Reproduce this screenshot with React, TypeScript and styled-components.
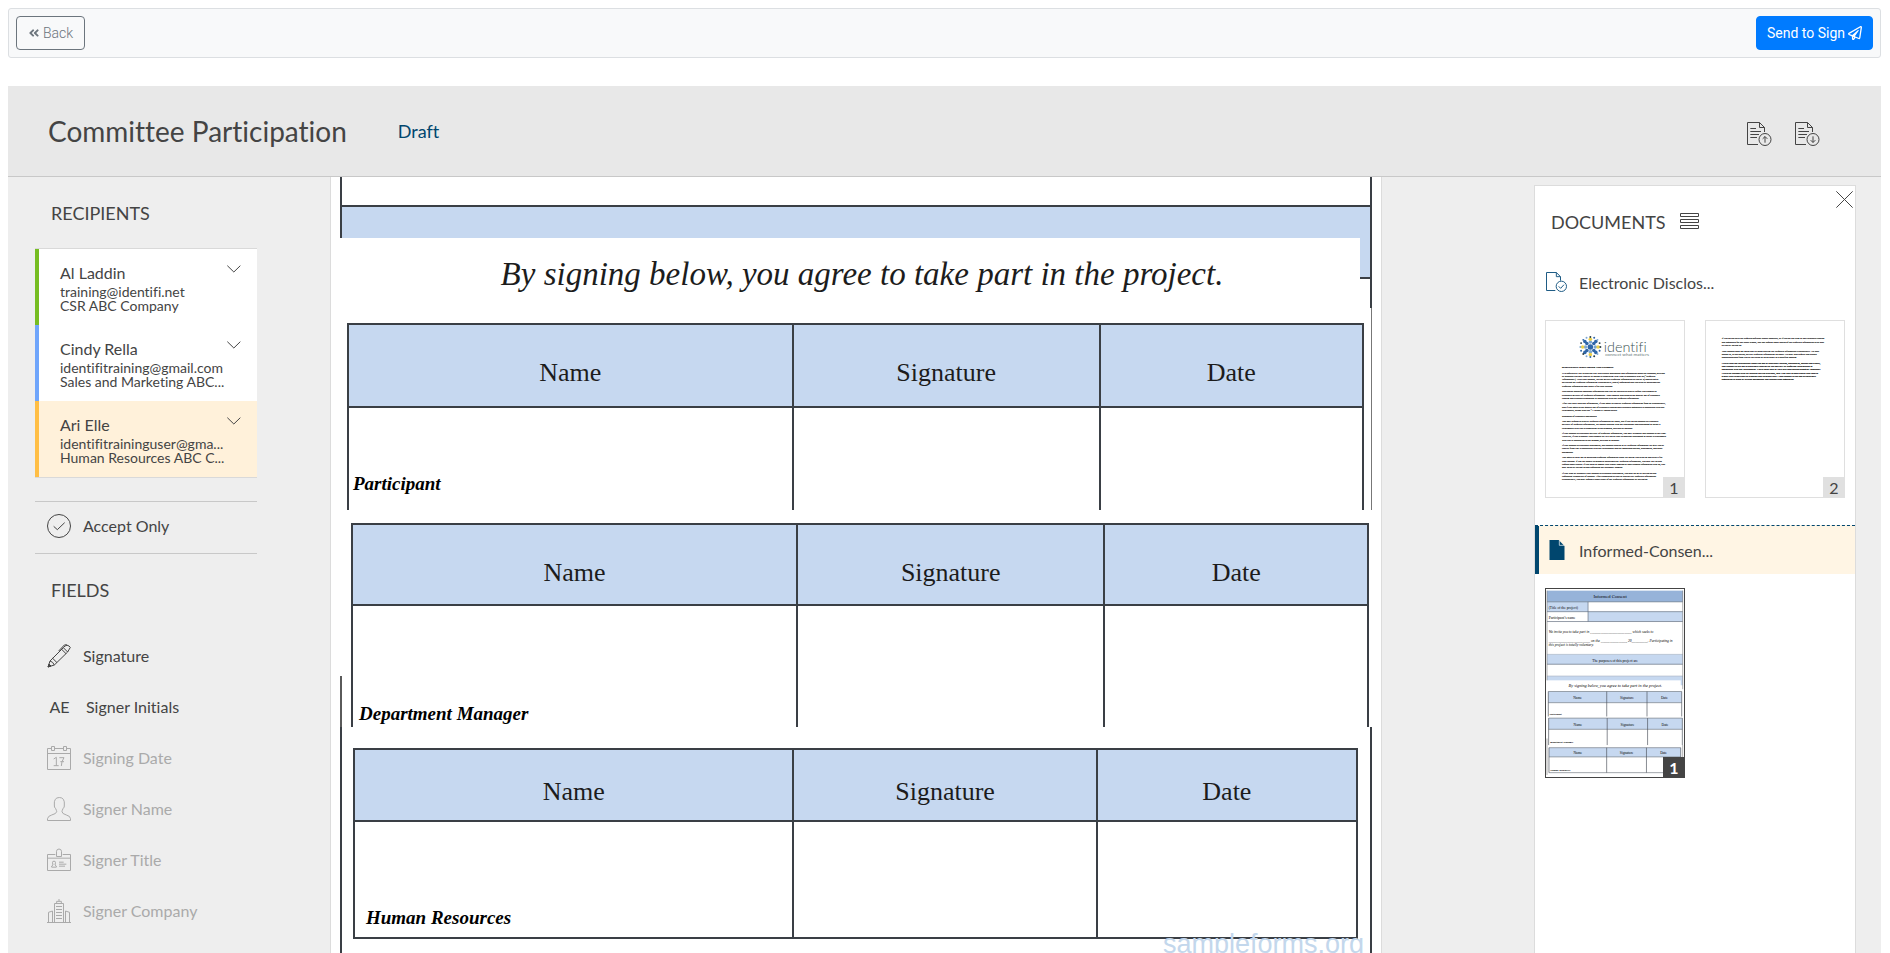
import React from "react";
import styled, { createGlobalStyle } from "styled-components";
import { FaAngleDoubleLeft, FaRegPaperPlane } from "react-icons/fa";

const ink = "#444444";
const navy = "#00466e";
const paleBlue = "#c6d8f0";
const hairline = "#d9d9d9";

const GlobalStyle = createGlobalStyle`
  *, *::before, *::after { box-sizing: border-box; }
  body {
    margin: 0;
    background: #fff;
    color: ${ink};
    font-family: Lato, "Liberation Sans", sans-serif;
    font-size: 16px;
    font-variant-ligatures: none;
  }
  h1, h2, p, ul { margin: 0; padding: 0; font-weight: 400; }
  ul { list-style: none; }
  button { font: inherit; color: inherit; margin: 0; padding: 0; border: 0; background: none; cursor: pointer; font-variant-ligatures: none; }
  button:disabled { cursor: default; }
`;

/* ---------- page shell ---------- */

const Shell = styled.div`
  display: flex;
  flex-direction: column;
  height: 100vh;
  padding: 8px 9px 0 8px;
`;

const Toolbar = styled.nav`
  display: flex;
  flex: none;
  justify-content: space-between;
  padding: 7px;
  margin-bottom: 28px;
  background: #f8f9fa;
  border: 1px solid #dcdfe2;
  border-radius: 3px;
`;

const ToolbarButton = styled.button<{ $primary?: boolean }>`
  display: flex;
  align-items: center;
  gap: 3px;
  height: 34px;
  padding: 0 ${(p) => (p.$primary ? 10 : 11)}px;
  border: 1px solid ${(p) => (p.$primary ? "#007bff" : "#6c757d")};
  border-radius: 4px;
  background: ${(p) => (p.$primary ? "#007bff" : "transparent")};
  color: ${(p) => (p.$primary ? "#fff" : "#6c757d")};
  font-family: Roboto, "Liberation Sans", sans-serif;
  font-size: 14px;
  font-weight: ${(p) => (p.$primary ? 400 : 300)};
`;

const TitleBar = styled.header`
  display: flex;
  flex: none;
  align-items: center;
  height: 91px;
  padding: 0 61px 0 40px;
  background: #e8e8e8;
  border-bottom: 1px solid #c8c8c8;
`;

const Title = styled.h1`
  font-size: 28px;
  line-height: 34px;
`;

const Status = styled.span`
  flex: 1;
  margin-left: 51px;
  color: ${navy};
  font-size: 18px;
  line-height: 24px;
`;

const TitleActions = styled.div`
  display: flex;
  gap: 23px;
  padding-top: 5px;
`;

const IconButton = styled.button`
  display: flex;
`;

const Workspace = styled.main`
  display: grid;
  flex: 1;
  grid-template-columns: 322px minmax(0, 1fr) 347px;
  min-height: 0;
  overflow: hidden;
  background: #eeeeee;
`;

/* ---------- left column ---------- */

const Sidebar = styled.aside`
  min-height: 0;
  padding: 24px 73px 0 27px;
  overflow-y: auto;
  scrollbar-width: none;
`;

const SectionTitle = styled.h2`
  padding-left: 16px;
  font-size: 18px;
  line-height: 24px;
`;

const RecipientList = styled.ul`
  margin-top: 23px;
  border: solid ${hairline};
  border-width: 1px 0;
`;

const Recipient = styled.li<{ $stripe: string; $active?: boolean }>`
  background: ${(p) => (p.$active ? "#fff1da" : "#fff")};
  border-left: 4px solid ${(p) => p.$stripe};
`;

const RecipientButton = styled.button`
  display: flex;
  align-items: flex-start;
  width: 100%;
  height: 76px;
  padding: 14px 16px 0 21px;
  text-align: left;
  svg { margin-top: 2px; }
`;

const RecipientText = styled.span`
  display: flex;
  flex: none;
  flex-direction: column;
  width: 167px;
  font-size: 14px;
  line-height: 14px;
`;

const RecipientName = styled.span`
  margin-bottom: 2px;
  font-size: 16px;
  line-height: 20px;
`;

/* The padding keeps descenders visible without opening up the tight lines. */
const Clipped = styled.span`
  margin: -2px 0 -3px;
  padding: 2px 0 3px;
  overflow: hidden;
  text-overflow: ellipsis;
  white-space: nowrap;
`;

const AcceptBox = styled.div`
  margin: 23px 0 24px;
  border: solid #c8c8c8;
  border-width: 1px 0;
`;

const FieldList = styled.ul`
  margin-top: 28px;
`;

const FieldButton = styled.button<{ $gap?: number }>`
  display: flex;
  align-items: center;
  gap: ${(p) => p.$gap ?? 12}px;
  width: 100%;
  height: 51px;
  padding-left: 12px;
  white-space: nowrap;
  text-align: left;
  &:disabled { color: #aaaaaa; }
`;

const AcceptButton = styled(FieldButton)`
  padding-bottom: 4px;
`;

const Initials = styled.span`
  width: 25px;
  text-align: center;
`;

/* ---------- document viewer ---------- */

const Viewer = styled.section`
  min-height: 0;
  padding-right: 152px;
  overflow-y: auto;
  scrollbar-width: none;
`;

const Sheet = styled.article`
  border: solid #dcdcdc;
  border-width: 0 1px;
  background: #fff;
  color: #1c1c1c;
  font-family: "Liberation Serif", serif;
`;

const rule = "2px solid #3a3f45";

const PriorRow = styled.div`
  height: 61px;
  margin: 0 9px;
  border: ${rule};
  border-width: 0 2px;
`;

const PriorBlank = styled.div`
  height: 30px;
  border-bottom: ${rule};
`;

const PriorShade = styled.div`
  height: 31px;
  background: ${paleBlue};
`;

const AgreementRow = styled.div`
  display: flex;
  height: 70px;
  margin: 0 9px;
  border-right: ${rule};
`;

const Agreement = styled.p`
  flex: 1;
  padding: 16px 0 0 24px;
  font-size: 33px;
  font-style: italic;
  line-height: 40px;
  text-align: center;
  white-space: nowrap;
`;

const ShadeStrip = styled.div`
  width: 10px;
  height: 41px;
  background: ${paleBlue};
  border-bottom: ${rule};
`;

const FirstBlock = styled.div`
  margin-right: 9px;
  padding: 15px 7px 0 16px;
  border-right: 1px solid #777;
`;

const SecondBlock = styled.div`
  display: flex;
  align-items: flex-end;
  gap: 9px;
  padding: 13px 12px 0 9px;
`;

const Rail = styled.div`
  flex: none;
  width: 2px;
  height: 51px;
  background: #5a5a5a;
`;

const ThirdBlock = styled.div`
  position: relative;
  margin: 0 9px;
  padding: 21px 12px 60px 11px;
  border: ${rule};
  border-width: 0 2px;
`;

const Watermark = styled.span`
  position: absolute;
  right: 6px;
  top: 201px;
  color: #c3d7ec;
  font-family: "Liberation Sans", sans-serif;
  font-size: 27px;
  line-height: 32px;
`;

const SignTable = styled.table<{ $closed?: boolean }>`
  width: 100%;
  table-layout: fixed;
  border-spacing: 0;
  border: ${rule};
  border-bottom-width: ${(p) => (p.$closed ? 2 : 0)}px;
  th:nth-child(1) { width: 43.7%; }
  th:nth-child(2) { width: 30.3%; }
`;

const HeadCell = styled.th<{ $height: number; $drop: number }>`
  height: ${(p) => p.$height}px;
  padding: 0 0 ${(p) => p.$drop}px;
  background: ${paleBlue};
  border-bottom: ${rule};
  font-size: 26px;
  font-weight: 400;
  line-height: 30px;
  text-align: center;
  vertical-align: bottom;
  & + & { border-left: ${rule}; }
`;

const BodyCell = styled.td<{ $height: number; $drop?: number; $indent?: number }>`
  height: ${(p) => p.$height}px;
  padding: 0 0 ${(p) => p.$drop ?? 0}px ${(p) => p.$indent ?? 0}px;
  font-size: 19px;
  font-style: italic;
  font-weight: 700;
  line-height: 24px;
  color: #000;
  vertical-align: bottom;
  & + & { border-left: ${rule}; }
`;

/* ---------- documents panel ---------- */

const Panel = styled.aside`
  display: flex;
  flex-direction: column;
  margin: 8px 25px 0 0;
  background: #fff;
  border: 1px solid #dcdcdc;
  border-bottom: 0;
`;

const PanelHead = styled.div`
  display: flex;
  align-items: flex-start;
  height: 72px;
  padding: 5px 2px 0 16px;
`;

const PanelTitle = styled.h2`
  margin: 19px 14px 0 0;
  font-size: 18px;
  line-height: 24px;
`;

const ListButton = styled(IconButton)`
  margin-top: 22px;
`;

const CloseButton = styled(IconButton)`
  margin-left: auto;
`;

const DocRow = styled.button<{ $active?: boolean }>`
  display: flex;
  align-items: center;
  gap: 11px;
  width: 100%;
  height: ${(p) => (p.$active ? 49 : 48)}px;
  padding-left: ${(p) => (p.$active ? 0 : 11)}px;
  background: ${(p) => (p.$active ? "#fff5e4" : "transparent")};
  border-top: ${(p) => (p.$active ? `1px dashed ${navy}` : "0")};
  text-align: left;
`;

const ActiveMark = styled.span`
  align-self: stretch;
  width: 4px;
  margin-right: -4px;
  background: ${navy};
`;

const DocIcon = styled.span`
  display: flex;
  width: 22px;
  justify-content: center;
`;

const Thumbs = styled.div`
  display: flex;
  gap: 20px;
  padding: 14px 10px 27px;
`;

const Thumb = styled.button<{ $active?: boolean }>`
  position: relative;
  display: flex;
  flex: none;
  width: 140px;
  border: 1px solid ${(p) => (p.$active ? ink : "#dfdfdf")};
  background: #fff;
  svg { width: 100%; }
`;

const PageNumber = styled.span<{ $active?: boolean }>`
  position: absolute;
  right: -1px;
  bottom: -1px;
  width: 22px;
  height: 21px;
  background: ${(p) => (p.$active ? ink : "#e0e0e0")};
  color: ${(p) => (p.$active ? "#fff" : ink)};
  font-size: 16px;
  font-weight: ${(p) => (p.$active ? 700 : 400)};
  line-height: 21px;
  text-align: center;
`;

/* ---------- icons: drawn on a grid of three units to the pixel ---------- */

type GlyphProps = { w: number; h: number; children: React.ReactNode; color?: string; weight?: number };

const Glyph = ({ w, h, children, color = "currentColor", weight = 3 }: GlyphProps) => (
  <svg
    width={w}
    height={h}
    viewBox={`0 0 ${w * 3} ${h * 3}`}
    fill="none"
    stroke={color}
    strokeWidth={weight}
    aria-hidden="true"
  >
    {children}
  </svg>
);

const Transfer = ({ down }: { down?: boolean }) => (
  <Glyph w={25} h={24}>
    <path d="M33 67.500H1.500V1.500H37.500L52.500 16.500V30M37.500 1.500V16.500H52.500" />
    <path d="M10 19.500H27M10 28.500H42M10 37.500H36M10 46.500H30" />
    <circle cx="54" cy="52.500" r="18" />
    {down ? <path d="M54 43V61M47 54.500L54 61.500L61 54.500" /> : <path d="M54 62V44M47 50.500L54 43.500L61 50.500" />}
  </Glyph>
);

const Chevron = () => (
  <Glyph w={14} h={8} weight={3}>
    <path d="M1 2L20.500 21L40 2" />
  </Glyph>
);

const AcceptIcon = () => (
  <Glyph w={24} h={24} weight={3}>
    <circle cx="36" cy="36" r="34.500" />
    <path d="M20 37L31 47L53 26" />
  </Glyph>
);

const PenIcon = () => (
  <Glyph w={24} h={24}>
    <path d="M3 69L9 51L49 11L62 24L22 63L3 69ZM9 51Q18 53 22 63M17 43L30 56M44 16L57 29M49 11L54 6Q60 1 66 6L70 10L62 24M35 21L52 3Q55 1 60 3" />
    <path d="M3 69L6 60L12 66Z" fill="currentColor" />
  </Glyph>
);

const CalendarIcon = () => (
  <Glyph w={24} h={24}>
    <path d="M13 7.500H1.500V70.500H70.500V7.500H60M24 7.500H49M1.500 22.500H70.500" />
    <path d="M13.500 1.500H22.500V13.500H13.500ZM49.500 1.500H58.500V13.500H49.500Z" />
    <path d="M20 39L28 34V59M20 59H35M37 35H51Q43 46 43 60M40 47H51" />
  </Glyph>
);

const PersonIcon = () => (
  <Glyph w={24} h={24}>
    <path d="M1.500 70.500V65Q3 57 14 54Q29 50 29 44Q29 41 26 35Q21 31 22 24Q20 1.500 37 1.500Q54 1.500 52 24Q53 31 48 35Q45 41 45 44Q45 50 58 54Q70 57 70.500 65V70.500Z" />
  </Glyph>
);

const BadgeIcon = () => (
  <Glyph w={24} h={24}>
    <path d="M25 19.500H1.500V67.500H70.500V19.500H47M1.500 30.500H70.500" />
    <path d="M28.500 25.500V10Q29 3 36 3Q43 3 43.500 10V25.500Z" />
    <path d="M14 57.500V54L18 51L16.500 44Q16 39.500 21 39.500Q26 39.500 25.500 44L24 51L28 54V57.500ZM36 42.500H50M36 48.500H58M36 54.500H54" />
  </Glyph>
);

const CompanyIcon = () => (
  <Glyph w={24} h={24}>
    <path d="M0 70.500H73M22.500 70V13.500H49.500V70M29 13V7H43V13M36 7V0" />
    <path d="M4.500 70V40L16.500 36V70M55.500 70V36L67.500 40V70M27 22.500H45M27 31.500H45M27 40.500H45M27 49.500H45M27 58.500H45" />
  </Glyph>
);

const ListIcon = () => (
  <Glyph w={19} h={16}>
    <path d="M1.500 1.500H55.500V10.500H1.500ZM1.500 19.500H55.500V28.500H1.500ZM1.500 37.500H55.500V46.500H1.500Z" />
  </Glyph>
);

const CloseIcon = () => (
  <Glyph w={17} h={17}>
    <path d="M1 1L50 50M50 1L1 50" />
  </Glyph>
);

const CheckedDocIcon = () => (
  <Glyph w={22} h={20} color="#1f5c85">
    <path d="M28 55.500H1.500V1.500H31L43.500 14V26M31 1.500V14H43.500" />
    <circle cx="46" cy="43" r="15.500" />
    <path d="M38 43L44 49L54 38" />
  </Glyph>
);

const SolidDocIcon = () => (
  <Glyph w={16} h={20} color={navy}>
    <path d="M1.500 0H29L46.500 18V60H1.500Z" fill={navy} stroke="none" />
    <path d="M31 2V16H46" stroke="#fff" strokeWidth={2} />
  </Glyph>
);

/* ---------- page previews ---------- */

type Paragraph = { y: number; bold?: boolean; lines: string[] };

const Prose = ({ x, paragraphs }: { x: number; paragraphs: Paragraph[] }) => (
  <g fontFamily="Liberation Serif, serif" fontSize="15" fill="#000" stroke="#000" strokeWidth="0.7">
    {paragraphs.map((p) =>
      p.lines.map((line, i) => (
        <text key={line} x={x} y={p.y * 2 + i * 20} fontWeight={p.bold ? 700 : 400}>
          {line}
        </text>
      ))
    )}
  </g>
);

const disclosureOne: Paragraph[] = [
  { y: 143, bold: true, lines: ["ELECTRONIC DISCLOSURE AND CONSENT"] },
  {
    y: 160,
    lines: [
      "It is required by law to provide you with certain disclosures and information about the products, services",
      "or accounts you may receive or access in connection with your relationship with us (“Required",
      "Information”). With your consent, we can deliver Required Information to you by a) displaying or",
      "delivering the Required Information electronically, and b) requesting that you print or download the",
      "Required Information and retain it for your records.",
    ],
  },
  {
    y: 217,
    lines: [
      "This notice contains important information that you are entitled to receive before you consent to",
      "electronic delivery of Required Information. Your consent also permits the general use of electronic",
      "records and electronic signatures in connection with the Required Information.",
    ],
  },
  {
    y: 254,
    lines: [
      "After you have read this information, if you agree to receive Required Information from us electronically,",
      "and if you agree to the general use of electronic records and electronic signatures in connection with our",
      "relationship, please click the “I ACCEPT” button below.",
    ],
  },
  { y: 291, lines: ["Statement of electronic disclosures:"] },
  {
    y: 308,
    lines: [
      "You may request to receive Required Information on paper, but if you do not consent to electronic",
      "delivery of Required Information, we cannot proceed with the acceptance and processing to create a",
      "relationship with you in connection to the products, services or account.",
    ],
  },
  {
    y: 344,
    lines: [
      "If you consent to electronic delivery of Required Information, you may withdraw that consent at any time.",
      "However, if you withdraw your consent we will not be able to continue processing to create a relationship",
      "with you in connection to the product, services or account.",
    ],
  },
  {
    y: 381,
    lines: [
      "If you consent to electronic disclosures, that consent applies to all Required Information we give you or",
      "receive from you in connection with our relationship and the associated notices, disclosures, and other",
      "documents.",
    ],
  },
  {
    y: 418,
    lines: [
      "You agree to print out or download Required Information when we advise you to do so and keep it for",
      "your records. If you are unable to access or download any Required Information, you may call us and",
      "request paper copies. If you need to update your e-mail address or other contact information with us, you",
      "may do so by calling us and requesting the necessary updates.",
    ],
  },
  {
    y: 465,
    lines: [
      "If you wish to withdraw your consent to electronic disclosures, you may do so by calling us and",
      "requesting withdrawal of consent. After consenting to receive and deliver Required Information",
      "electronically, you may request a paper copy of the Required Information by calling us.",
    ],
  },
];

const disclosureTwo: Paragraph[] = [
  {
    y: 56,
    lines: [
      "If you do not have the required software and/or hardware, or if you do not wish to use electronic records",
      "and signatures for any other reason, you can request paper copies of the Required Information to be sent",
      "to you by calling us.",
    ],
  },
  {
    y: 93,
    lines: [
      "Your consent does not mean that we must provide the Required Information electronically. We may",
      "choose to, at our option, deliver Required Information on paper. We may also require that certain",
      "communications from you be delivered to us on paper at a specified address.",
    ],
  },
  {
    y: 130,
    bold: true,
    lines: [
      "I have read the information about the use of electronic records, disclosures, notices and e-mail,",
      "and consent to the use of electronic records for the delivery of Required Information in",
      "connection with our relationship. I have been able to view this information using my computer.",
      "I have an account with an internet service provider, and I am able to send e-mail and receive",
      "e-mail with hyperlinks to websites and attached files. I also consent to the use of electronic",
      "signatures in place of written documents and handwritten signatures.",
    ],
  },
];

const blue = "#2f66a8";
const yellow = "#ecd04a";
const slate = "#2b4048";
const sky = "#7ba7d3";

const ring = (count: number, radius: number, size: number, colors: string[]) =>
  Array.from({ length: count }, (_, i) => {
    const a = (i / count) * Math.PI * 2;
    return (
      <circle
        key={`${radius}-${i}`}
        cx={270 + Math.cos(a) * radius}
        cy={158 + Math.sin(a) * radius}
        r={size}
        fill={colors[i % colors.length]}
      />
    );
  });

const DisclosurePageOne = () => (
  <svg viewBox="0 0 840 1074" role="img" aria-label="Electronic disclosure, page 1">
    {ring(1, 0, 17, [blue])}
    {ring(8, 30, 11, [sky, blue])}
    {ring(8, 47, 11, [yellow, blue])}
    {ring(16, 61, 6, [slate, blue, sky])}
    <text x="352" y="188" fontFamily="Lato, sans-serif" fontWeight="300" fontSize="88" fill="#3f5656">
      identifi
    </text>
    <text x="360" y="216" fontFamily="Lato, sans-serif" fontSize="28" fill="#6a7a7a">
      connect what matters
    </text>
    <Prose x={98} paragraphs={disclosureOne} />
  </svg>
);

const DisclosurePageTwo = () => (
  <svg viewBox="0 0 840 1074" role="img" aria-label="Electronic disclosure, page 2">
    <Prose x={96} paragraphs={disclosureTwo} />
  </svg>
);

const MiniTable = ({ x, y, right, head, bottom, closed, label }: {
  x: number; y: number; right: number; head: number; bottom: number; closed?: boolean; label: string;
}) => {
  const c1 = x + (right - x) * 0.438;
  const c2 = x + (right - x) * 0.74;
  return (
    <g>
      <rect x={x} y={y} width={right - x} height={head - y} fill={paleBlue} />
      <path d={`M${x} ${y}H${right}M${x} ${head}H${right}${closed ? `M${x} ${bottom}H${right}` : ""}`} stroke="#6f7780" strokeWidth="2" />
      <path d={`M${x} ${y}V${bottom}M${c1} ${y}V${bottom}M${c2} ${y}V${bottom}M${right} ${y}V${bottom}`} stroke="#4a5058" strokeWidth="2" />
      <g fontSize="11" textAnchor="middle">
        <text x={(x + c1) / 2} y={head - 10}>Name</text>
        <text x={(c1 + c2) / 2} y={head - 10}>Signature</text>
        <text x={(c2 + right) / 2} y={head - 10}>Date</text>
      </g>
      <text x={x + 4} y={bottom - 5} fontSize="8" fontWeight="700" fontStyle="italic">{label}</text>
    </g>
  );
};

const ConsentPage = () => (
  <svg viewBox="0 0 420 570" role="img" aria-label="Informed consent, page 1" fontFamily="Liberation Serif, serif">
    <rect x="3" y="5" width="414" height="34" fill="#96b3d9" />
    <rect x="3" y="39" width="125" height="30" fill={paleBlue} />
    <rect x="128" y="69" width="289" height="30" fill={paleBlue} />
    <rect x="3" y="199" width="414" height="30" fill={paleBlue} />
    <rect x="3" y="265" width="414" height="13" fill={paleBlue} />
    <rect x="410" y="265" width="7" height="28" fill={paleBlue} />
    <path d="M3 39H417M3 69H417M3 99H417M128 39V99M3 229H417" stroke="#5f6b7c" strokeWidth="2" />
    <path d="M3 199H417M3 265H417" stroke="#a8b4c4" strokeWidth="2" />
    <path d="M3 5V278M416 5V305M3 455V566M416 475V566" stroke="#8a8a8a" strokeWidth="2" />
    <text x="195" y="28" fontSize="14" textAnchor="middle">Informed Consent</text>
    <text x="8" y="61" fontSize="11">(Title of the project)</text>
    <text x="8" y="91" fontSize="11">Participant’s name</text>
    <g fontSize="11" fontStyle="italic">
      <text x="8" y="135">We invite you to take part in _______________________ which seeks to</text>
      <text x="8" y="160">_______________________ on the ______________, 20_________. Participating in</text>
      <text x="8" y="174">this project is totally voluntary.</text>
    </g>
    <text x="210" y="221" fontSize="11" textAnchor="middle">The purposes of this project are</text>
    <text x="211" y="298" fontSize="13" fontStyle="italic" textAnchor="middle">By signing below, you agree to take part in the project.</text>
    <MiniTable x={7} y={312} right={413} head={346} bottom={388} label="Participant" />
    <MiniTable x={8} y={393} right={415} head={427} bottom={475} label="Department Manager" />
    <MiniTable x={9} y={483} right={410} head={511} bottom={559} closed label="Human Resources" />
  </svg>
);

/* ---------- content ---------- */

const recipients = [
  { name: "Al Laddin", email: "training@identifi.net", role: "CSR ABC Company", stripe: "#76bd22" },
  { name: "Cindy Rella", email: "identifitraining@gmail.com", role: "Sales and Marketing ABC...", stripe: "#6fa5fb" },
  { name: "Ari Elle", email: "identifitraininguser@gma...", role: "Human Resources ABC C...", stripe: "#ffbe45", active: true },
];

const lockedFields = [
  { label: "Signing Date", icon: <CalendarIcon /> },
  { label: "Signer Name", icon: <PersonIcon /> },
  { label: "Signer Title", icon: <BadgeIcon /> },
  { label: "Signer Company", icon: <CompanyIcon /> },
];

type SignatureTableProps = {
  label: string; head: number; body: number; headDrop: number; labelDrop: number; indent: number; closed?: boolean;
};

const SignatureTable = ({ label, head, body, headDrop, labelDrop, indent, closed }: SignatureTableProps) => (
  <SignTable $closed={closed}>
    <thead>
      <tr>
        {["Name", "Signature", "Date"].map((h) => (
          <HeadCell key={h} scope="col" $height={head} $drop={headDrop}>{h}</HeadCell>
        ))}
      </tr>
    </thead>
    <tbody>
      <tr>
        <BodyCell $height={body} $drop={labelDrop} $indent={indent}>{label}</BodyCell>
        <BodyCell $height={body} />
        <BodyCell $height={body} />
      </tr>
    </tbody>
  </SignTable>
);

export default function App() {
  return (
    <Shell>
      <GlobalStyle />
      <Toolbar>
        <ToolbarButton type="button"><FaAngleDoubleLeft size={12} />Back</ToolbarButton>
        <ToolbarButton type="button" $primary>Send to Sign<FaRegPaperPlane size={14} /></ToolbarButton>
      </Toolbar>

      <TitleBar>
        <Title>Committee Participation</Title>
        <Status>Draft</Status>
        <TitleActions>
          <IconButton type="button" aria-label="Upload document"><Transfer /></IconButton>
          <IconButton type="button" aria-label="Download document"><Transfer down /></IconButton>
        </TitleActions>
      </TitleBar>

      <Workspace>
        <Sidebar>
          <SectionTitle>RECIPIENTS</SectionTitle>
          <RecipientList>
            {recipients.map((r) => (
              <Recipient key={r.name} $stripe={r.stripe} $active={r.active}>
                <RecipientButton type="button">
                  <RecipientText>
                    <RecipientName>{r.name}</RecipientName>
                    <Clipped>{r.email}</Clipped>
                    <Clipped>{r.role}</Clipped>
                  </RecipientText>
                  <Chevron />
                </RecipientButton>
              </Recipient>
            ))}
          </RecipientList>
          <AcceptBox>
            <AcceptButton type="button"><AcceptIcon />Accept Only</AcceptButton>
          </AcceptBox>
          <SectionTitle>FIELDS</SectionTitle>
          <FieldList>
            <li><FieldButton type="button"><PenIcon />Signature</FieldButton></li>
            <li><FieldButton type="button" $gap={14}><Initials>AE</Initials>Signer Initials</FieldButton></li>
            {lockedFields.map((f) => (
              <li key={f.label}><FieldButton type="button" disabled>{f.icon}{f.label}</FieldButton></li>
            ))}
          </FieldList>
        </Sidebar>

        <Viewer>
          <Sheet>
            <PriorRow>
              <PriorBlank />
              <PriorShade />
            </PriorRow>
            <AgreementRow>
              <Agreement>By signing below, you agree to take part in the project.</Agreement>
              <ShadeStrip />
            </AgreementRow>
            <FirstBlock>
              <SignatureTable label="Participant" head={83} body={102} headDrop={18} labelDrop={14} indent={4} />
            </FirstBlock>
            <SecondBlock>
              <Rail />
              <SignatureTable label="Department Manager" head={81} body={121} headDrop={16} labelDrop={1} indent={6} />
            </SecondBlock>
            <ThirdBlock>
              <SignatureTable label="Human Resources" head={72} body={115} headDrop={13} labelDrop={7} indent={11} closed />
              <Watermark>sampleforms.org</Watermark>
            </ThirdBlock>
          </Sheet>
        </Viewer>

        <Panel>
          <PanelHead>
            <PanelTitle>DOCUMENTS</PanelTitle>
            <ListButton type="button" aria-label="List view"><ListIcon /></ListButton>
            <CloseButton type="button" aria-label="Close documents"><CloseIcon /></CloseButton>
          </PanelHead>
          <DocRow type="button">
            <DocIcon><CheckedDocIcon /></DocIcon>Electronic Disclos...
          </DocRow>
          <Thumbs>
            <Thumb type="button"><DisclosurePageOne /><PageNumber>1</PageNumber></Thumb>
            <Thumb type="button"><DisclosurePageTwo /><PageNumber>2</PageNumber></Thumb>
          </Thumbs>
          <DocRow type="button" $active>
            <ActiveMark />
            <DocIcon><SolidDocIcon /></DocIcon>Informed-Consen...
          </DocRow>
          <Thumbs>
            <Thumb type="button" $active><ConsentPage /><PageNumber $active>1</PageNumber></Thumb>
          </Thumbs>
        </Panel>
      </Workspace>
    </Shell>
  );
}
